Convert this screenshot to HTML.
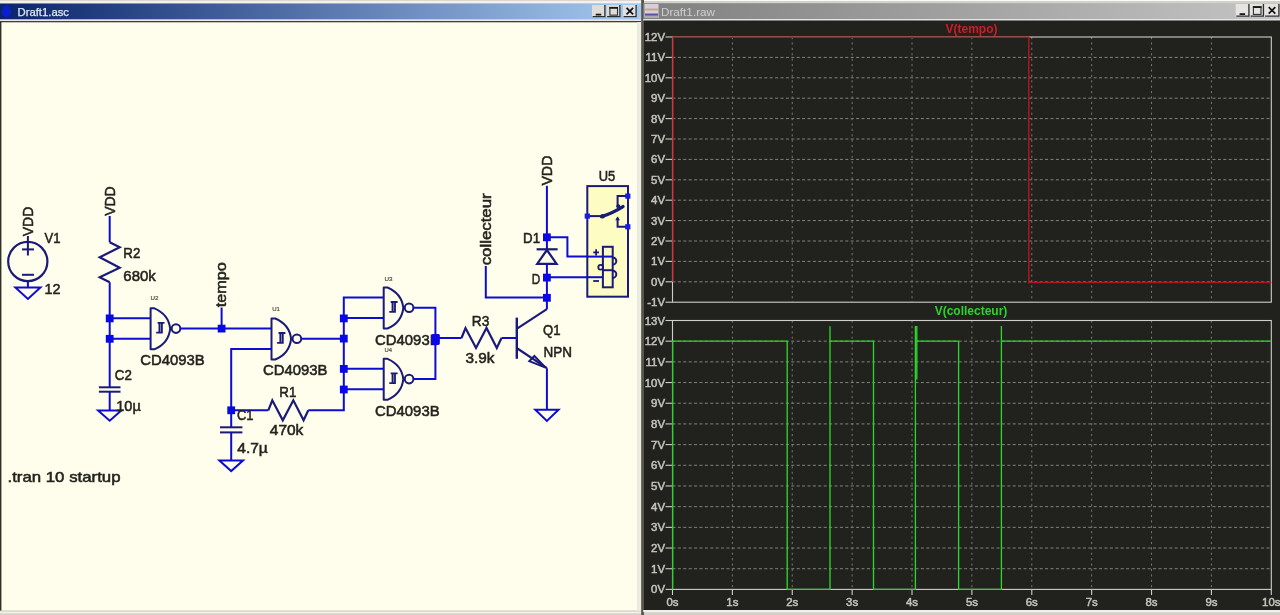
<!DOCTYPE html>
<html><head><meta charset="utf-8"><style>
html,body{margin:0;padding:0;width:1280px;height:615px;overflow:hidden;background:#d4d0c8;}
svg{position:absolute;left:0;top:0;font-family:"Liberation Sans", sans-serif;will-change:transform;}
</style></head><body>
<svg width="1280" height="615" viewBox="0 0 1280 615">
<defs>
<linearGradient id="tb1" x1="0" x2="1" y1="0" y2="0"><stop offset="0" stop-color="#0a246a"/><stop offset="1" stop-color="#a6caf0"/></linearGradient>
<linearGradient id="tb2" x1="0" x2="1" y1="0" y2="0"><stop offset="0" stop-color="#808080"/><stop offset="1" stop-color="#c4c4c4"/></linearGradient>
</defs>
<rect x="0" y="0" width="1280" height="615" fill="#d4d0c8"/>
<rect x="0" y="0" width="641" height="1" fill="#dcd6ce"/>
<rect x="0" y="1" width="641" height="2.5" fill="#f2f0f0"/>
<rect x="643" y="0" width="637" height="1.2" fill="#fafaf6"/>
<rect x="643" y="1.2" width="637" height="2" fill="#d0d0cc"/>
<!-- left window -->
<rect x="0" y="3.5" width="641" height="16" fill="url(#tb1)"/>
<rect x="0" y="19.5" width="641" height="1.5" fill="#e8e8e8"/>
<rect x="0" y="21" width="641" height="1.5" fill="#404038"/>
<rect x="0" y="22" width="1.6" height="589" fill="#303028"/>
<rect x="1.6" y="22.5" width="635.6" height="588" fill="#fffeec"/>
<rect x="0" y="610.5" width="641" height="1.4" fill="#dedbd0"/>
<rect x="0" y="611.9" width="641" height="1.5" fill="#f2f0e8"/>
<rect x="637.2" y="22" width="3.8" height="589" fill="#ecebe4"/>
<rect x="641.2" y="0" width="2.8" height="615" fill="#56564e"/>
<ellipse cx="6.5" cy="11.5" rx="4.5" ry="6" fill="#0a1ee0" opacity="0.85"/>
<text x="17.5" y="16.2" font-size="10" fill="#e0e8f4" stroke="#e0e8f4" stroke-width="0.25" textLength="51.5" lengthAdjust="spacingAndGlyphs">Draft1.asc</text>
<!-- right window -->
<rect x="643.2" y="3.2" width="637" height="15.8" fill="url(#tb2)"/>
<rect x="643.2" y="19" width="637" height="1.5" fill="#e4e4e4"/>
<rect x="644" y="20.5" width="636" height="589.5" fill="#21211e"/>
<rect x="643.2" y="610" width="637" height="2.2" fill="#f0f0ec"/>
<rect x="644.5" y="4" width="14" height="14" fill="#d8d0d8"/>
<rect x="645" y="8.5" width="13" height="2" fill="#c0a890"/>
<rect x="645" y="13.5" width="13" height="2.2" fill="#6050a8"/>
<rect x="645" y="16.2" width="13" height="1.6" fill="#a0a0a8"/>
<text x="661" y="16" font-size="10" fill="#cfcfcf" textLength="54" lengthAdjust="spacingAndGlyphs">Draft1.raw</text>
<rect x="592" y="5" width="13.5" height="12.3" fill="#e0dcd6"/><path d="M592.6,16.7 H604.9 V5" fill="none" stroke="#2a2e30" stroke-width="1.3"/><rect x="595.75" y="13.700000000000001" width="5.5" height="1.8" fill="#1a1a1a"/><rect x="606.5" y="5" width="14" height="12.3" fill="#dcdcd8"/><path d="M607.1,16.7 H619.9 V5" fill="none" stroke="#2a2e30" stroke-width="1.3"/><rect x="609.9" y="7.550000000000001" width="7.6" height="7.6" fill="none" stroke="#303030" stroke-width="1.1"/><rect x="609.4" y="6.95" width="8.6" height="1.8" fill="#1a1a1a"/><rect x="623" y="5" width="13.7" height="12.3" fill="#e0e0e0"/><path d="M623.6,16.7 H636.1 V5" fill="none" stroke="#2a2e30" stroke-width="1.3"/><path d="M626.5500000000001,7.8500000000000005 L633.15,14.45 M633.15,7.8500000000000005 L626.5500000000001,14.45" stroke="#111" stroke-width="1.7"/><rect x="1235.7" y="4" width="13.8" height="12.8" fill="#e6e4e0"/><path d="M1236.3,16.2 H1248.9 V4" fill="none" stroke="#2a2e30" stroke-width="1.3"/><rect x="1239.6000000000001" y="13.200000000000001" width="5.5" height="1.8" fill="#1a1a1a"/><rect x="1250" y="4" width="14" height="12.8" fill="#e6e4e0"/><path d="M1250.6,16.2 H1263.4 V4" fill="none" stroke="#2a2e30" stroke-width="1.3"/><rect x="1253.4" y="6.800000000000001" width="7.6" height="7.6" fill="none" stroke="#303030" stroke-width="1.1"/><rect x="1252.9" y="6.2" width="8.6" height="1.8" fill="#1a1a1a"/><rect x="1264.5" y="4" width="15" height="12.8" fill="#e6e4e0"/><path d="M1265.1,16.2 H1278.9 V4" fill="none" stroke="#2a2e30" stroke-width="1.3"/><path d="M1268.7,7.1000000000000005 L1275.3,13.7 M1275.3,7.1000000000000005 L1268.7,13.7" stroke="#111" stroke-width="1.7"/>
<circle cx="27.8" cy="261.5" r="19.6" fill="none" stroke="#1a1a78" stroke-width="2.2"/>
<polyline points="22.00,249.40 34.00,249.40" fill="none" stroke="#1a1a78" stroke-width="2" stroke-linejoin="miter" stroke-linecap="butt"/>
<polyline points="27.90,236.00 27.90,255.50" fill="none" stroke="#1a1a78" stroke-width="2" stroke-linejoin="miter" stroke-linecap="butt"/>
<polyline points="22.00,274.80 34.00,274.80" fill="none" stroke="#1a1a78" stroke-width="2" stroke-linejoin="miter" stroke-linecap="butt"/>
<polyline points="27.90,281.00 27.90,287.50" fill="none" stroke="#0c0cd2" stroke-width="2" stroke-linejoin="miter" stroke-linecap="butt"/>
<polygon points="15.399999999999999,287.5 40.4,287.5 27.9,299.0" fill="none" stroke="#0c0cd2" stroke-width="2" stroke-linejoin="miter"/>
<text x="33.5" y="236.2" font-size="15" fill="#24241f" stroke="#24241f" stroke-width="0.55" textLength="29.5" lengthAdjust="spacingAndGlyphs" transform="rotate(-90 33.5 236.2)">VDD</text>
<text x="44.5" y="242.6" font-size="15" fill="#24241f" stroke="#24241f" stroke-width="0.55" textLength="16" lengthAdjust="spacingAndGlyphs">V1</text>
<text x="44.5" y="293.6" font-size="15" fill="#24241f" stroke="#24241f" stroke-width="0.55" textLength="16" lengthAdjust="spacingAndGlyphs">12</text>
<text x="114.9" y="215.8" font-size="15" fill="#24241f" stroke="#24241f" stroke-width="0.55" textLength="29.5" lengthAdjust="spacingAndGlyphs" transform="rotate(-90 114.9 215.8)">VDD</text>
<polyline points="109.70,216.00 109.70,242.30" fill="none" stroke="#0c0cd2" stroke-width="2" stroke-linejoin="miter" stroke-linecap="butt"/>
<polyline points="109.70,242.30 119.70,247.30 99.70,257.30 119.70,267.80 99.70,277.30 109.70,282.30" fill="none" stroke="#1a1a78" stroke-width="2.2" stroke-linejoin="miter" stroke-linecap="butt"/>
<polyline points="109.70,282.30 109.70,387.30" fill="none" stroke="#0c0cd2" stroke-width="2" stroke-linejoin="miter" stroke-linecap="butt"/>
<polyline points="98.90,387.30 120.50,387.30" fill="none" stroke="#1a1a78" stroke-width="2" stroke-linejoin="miter" stroke-linecap="butt"/>
<polyline points="98.90,391.70 120.50,391.70" fill="none" stroke="#1a1a78" stroke-width="2" stroke-linejoin="miter" stroke-linecap="butt"/>
<polyline points="109.70,391.70 109.70,410.40" fill="none" stroke="#0c0cd2" stroke-width="2" stroke-linejoin="miter" stroke-linecap="butt"/>
<polygon points="98.10000000000001,410.4 121.3,410.4 109.7,420.7" fill="none" stroke="#0c0cd2" stroke-width="2" stroke-linejoin="miter"/>
<rect x="105.80" y="314.50" width="7.8" height="7.8" fill="#0808e8"/>
<rect x="105.80" y="334.90" width="7.8" height="7.8" fill="#0808e8"/>
<polyline points="109.70,318.30 150.60,318.30" fill="none" stroke="#0c0cd2" stroke-width="2" stroke-linejoin="miter" stroke-linecap="butt"/>
<polyline points="109.70,338.80 150.60,338.80" fill="none" stroke="#0c0cd2" stroke-width="2" stroke-linejoin="miter" stroke-linecap="butt"/>
<text x="123.3" y="258.2" font-size="15" fill="#24241f" stroke="#24241f" stroke-width="0.55" textLength="17" lengthAdjust="spacingAndGlyphs">R2</text>
<text x="123.3" y="281.0" font-size="15" fill="#24241f" stroke="#24241f" stroke-width="0.55" textLength="32.5" lengthAdjust="spacingAndGlyphs">680k</text>
<text x="114.8" y="379.6" font-size="15" fill="#24241f" stroke="#24241f" stroke-width="0.55" textLength="17" lengthAdjust="spacingAndGlyphs">C2</text>
<text x="116.3" y="410.6" font-size="15" fill="#24241f" stroke="#24241f" stroke-width="0.55" textLength="24.5" lengthAdjust="spacingAndGlyphs">10µ</text>
<path d="M150.6,308.3 H154.4 Q168.6,314.3 170.2,328.6 Q168.6,343.3 154.4,349.3 H150.6 Z" fill="none" stroke="#1a1a78" stroke-width="2" stroke-linejoin="round"/>
<circle cx="176.0" cy="328.6" r="4.3" fill="none" stroke="#1a1a78" stroke-width="2"/>
<path d="M156.2,332.6 H161.9 V322.8 M157.6,322.8 H164.5 M159.4,322.8 V332.6" fill="none" stroke="#1a1a78" stroke-width="1.8"/>
<rect x="159.4" y="322.8" width="2.5" height="9.8" fill="#1a1a78" fill-opacity="0.35"/>
<text x="150.5" y="300.3" font-size="6" fill="#505048" stroke="#505048" stroke-width="0.2" textLength="8" lengthAdjust="spacingAndGlyphs">U2</text>
<text x="140.3" y="365.1" font-size="15" fill="#24241f" stroke="#24241f" stroke-width="0.55" textLength="64.5" lengthAdjust="spacingAndGlyphs">CD4093B</text>
<polyline points="180.00,328.60 271.50,328.60" fill="none" stroke="#0c0cd2" stroke-width="2" stroke-linejoin="miter" stroke-linecap="butt"/>
<rect x="217.70" y="324.70" width="7.8" height="7.8" fill="#0808e8"/>
<polyline points="221.60,328.60 221.60,307.50" fill="none" stroke="#0c0cd2" stroke-width="2" stroke-linejoin="miter" stroke-linecap="butt"/>
<text x="226.3" y="307.3" font-size="15" fill="#24241f" stroke="#24241f" stroke-width="0.55" textLength="45" lengthAdjust="spacingAndGlyphs" transform="rotate(-90 226.3 307.3)">tempo</text>
<path d="M271.5,318.5 H275.3 Q289.5,324.5 291.1,338.8 Q289.5,353.5 275.3,359.5 H271.5 Z" fill="none" stroke="#1a1a78" stroke-width="2" stroke-linejoin="round"/>
<circle cx="296.9" cy="338.8" r="4.3" fill="none" stroke="#1a1a78" stroke-width="2"/>
<path d="M277.1,342.8 H282.8 V333.0 M278.5,333.0 H285.4 M280.3,333.0 V342.8" fill="none" stroke="#1a1a78" stroke-width="1.8"/>
<rect x="280.3" y="333.0" width="2.5" height="9.8" fill="#1a1a78" fill-opacity="0.35"/>
<text x="272.2" y="311.2" font-size="6" fill="#505048" stroke="#505048" stroke-width="0.2" textLength="7.7" lengthAdjust="spacingAndGlyphs">U1</text>
<text x="263.0" y="375.3" font-size="15" fill="#24241f" stroke="#24241f" stroke-width="0.55" textLength="64.5" lengthAdjust="spacingAndGlyphs">CD4093B</text>
<polyline points="301.00,338.80 343.80,338.80" fill="none" stroke="#0c0cd2" stroke-width="2" stroke-linejoin="miter" stroke-linecap="butt"/>
<polyline points="271.50,349.00 231.20,349.00 231.20,427.30" fill="none" stroke="#0c0cd2" stroke-width="2" stroke-linejoin="miter" stroke-linecap="butt"/>
<polyline points="220.00,427.30 242.40,427.30" fill="none" stroke="#1a1a78" stroke-width="2" stroke-linejoin="miter" stroke-linecap="butt"/>
<polyline points="220.00,432.40 242.40,432.40" fill="none" stroke="#1a1a78" stroke-width="2" stroke-linejoin="miter" stroke-linecap="butt"/>
<polyline points="231.20,432.40 231.20,460.60" fill="none" stroke="#0c0cd2" stroke-width="2" stroke-linejoin="miter" stroke-linecap="butt"/>
<polygon points="219.39999999999998,460.6 243.0,460.6 231.2,471.1" fill="none" stroke="#0c0cd2" stroke-width="2" stroke-linejoin="miter"/>
<rect x="227.30" y="406.40" width="7.8" height="7.8" fill="#0808e8"/>
<polyline points="231.20,410.30 268.30,410.30" fill="none" stroke="#0c0cd2" stroke-width="2" stroke-linejoin="miter" stroke-linecap="butt"/>
<polyline points="268.30,410.30 272.30,400.30 282.80,420.30 293.30,400.30 303.60,420.30 308.30,410.30" fill="none" stroke="#1a1a78" stroke-width="2.2" stroke-linejoin="miter" stroke-linecap="butt"/>
<polyline points="308.30,410.30 343.80,410.30 343.80,297.50 383.70,297.50" fill="none" stroke="#0c0cd2" stroke-width="2" stroke-linejoin="miter" stroke-linecap="butt"/>
<text x="279.3" y="396.6" font-size="15" fill="#24241f" stroke="#24241f" stroke-width="0.55" textLength="17" lengthAdjust="spacingAndGlyphs">R1</text>
<text x="237.0" y="420.2" font-size="15" fill="#24241f" stroke="#24241f" stroke-width="0.55" textLength="16.5" lengthAdjust="spacingAndGlyphs">C1</text>
<text x="269.8" y="434.6" font-size="15" fill="#24241f" stroke="#24241f" stroke-width="0.55" textLength="33.5" lengthAdjust="spacingAndGlyphs">470k</text>
<text x="237.3" y="452.6" font-size="15" fill="#24241f" stroke="#24241f" stroke-width="0.55" textLength="30.5" lengthAdjust="spacingAndGlyphs">4.7µ</text>
<path d="M383.7,287.5 H387.5 Q401.7,293.5 403.3,307.8 Q401.7,322.5 387.5,328.5 H383.7 Z" fill="none" stroke="#1a1a78" stroke-width="2" stroke-linejoin="round"/>
<circle cx="409.09999999999997" cy="307.8" r="4.3" fill="none" stroke="#1a1a78" stroke-width="2"/>
<path d="M389.3,311.8 H395.0 V302.0 M390.7,302.0 H397.59999999999997 M392.5,302.0 V311.8" fill="none" stroke="#1a1a78" stroke-width="1.8"/>
<rect x="392.5" y="302.0" width="2.5" height="9.8" fill="#1a1a78" fill-opacity="0.35"/>
<path d="M383.7,358.8 H387.5 Q401.7,364.8 403.3,379.1 Q401.7,393.8 387.5,399.8 H383.7 Z" fill="none" stroke="#1a1a78" stroke-width="2" stroke-linejoin="round"/>
<circle cx="409.09999999999997" cy="379.1" r="4.3" fill="none" stroke="#1a1a78" stroke-width="2"/>
<path d="M389.3,383.1 H395.0 V373.3 M390.7,373.3 H397.59999999999997 M392.5,373.3 V383.1" fill="none" stroke="#1a1a78" stroke-width="1.8"/>
<rect x="392.5" y="373.3" width="2.5" height="9.8" fill="#1a1a78" fill-opacity="0.35"/>
<text x="384.5" y="280.5" font-size="6" fill="#505048" stroke="#505048" stroke-width="0.2" textLength="8" lengthAdjust="spacingAndGlyphs">U3</text>
<text x="384.5" y="351.5" font-size="6" fill="#505048" stroke="#505048" stroke-width="0.2" textLength="7.5" lengthAdjust="spacingAndGlyphs">U4</text>
<polyline points="343.80,318.00 383.70,318.00" fill="none" stroke="#0c0cd2" stroke-width="2" stroke-linejoin="miter" stroke-linecap="butt"/>
<polyline points="343.80,368.80 383.70,368.80" fill="none" stroke="#0c0cd2" stroke-width="2" stroke-linejoin="miter" stroke-linecap="butt"/>
<polyline points="343.80,389.30 383.70,389.30" fill="none" stroke="#0c0cd2" stroke-width="2" stroke-linejoin="miter" stroke-linecap="butt"/>
<rect x="339.90" y="314.50" width="7.8" height="7.8" fill="#0808e8"/>
<rect x="339.90" y="334.70" width="7.8" height="7.8" fill="#0808e8"/>
<rect x="339.90" y="365.00" width="7.8" height="7.8" fill="#0808e8"/>
<rect x="339.90" y="385.60" width="7.8" height="7.8" fill="#0808e8"/>
<text x="375.1" y="344.5" font-size="15" fill="#24241f" stroke="#24241f" stroke-width="0.55" textLength="64.5" lengthAdjust="spacingAndGlyphs">CD4093B</text>
<text x="375.1" y="415.6" font-size="15" fill="#24241f" stroke="#24241f" stroke-width="0.55" textLength="64.5" lengthAdjust="spacingAndGlyphs">CD4093B</text>
<polyline points="413.50,307.80 435.40,307.80 435.40,379.10 413.50,379.10" fill="none" stroke="#0c0cd2" stroke-width="2" stroke-linejoin="miter" stroke-linecap="butt"/>
<polyline points="435.40,338.00 461.50,338.00" fill="none" stroke="#0c0cd2" stroke-width="2" stroke-linejoin="miter" stroke-linecap="butt"/>
<rect x="431.50" y="334.40" width="7.8" height="7.8" fill="#0808e8"/>
<rect x="431.6" y="334.0" width="8.2" height="10.9" rx="1.6" fill="#0808e8"/>
<polyline points="461.50,338.00 465.50,328.00 476.00,348.00 486.50,328.00 496.80,348.00 501.50,338.00" fill="none" stroke="#1a1a78" stroke-width="2.2" stroke-linejoin="miter" stroke-linecap="butt"/>
<polyline points="501.50,338.00 516.80,338.00" fill="none" stroke="#0c0cd2" stroke-width="2" stroke-linejoin="miter" stroke-linecap="butt"/>
<text x="471.8" y="325.9" font-size="15" fill="#24241f" stroke="#24241f" stroke-width="0.55" textLength="17.5" lengthAdjust="spacingAndGlyphs">R3</text>
<text x="465.4" y="362.7" font-size="15" fill="#24241f" stroke="#24241f" stroke-width="0.55" textLength="29" lengthAdjust="spacingAndGlyphs">3.9k</text>
<polyline points="516.80,317.60 516.80,358.80" fill="none" stroke="#1a1a78" stroke-width="2.4" stroke-linejoin="miter" stroke-linecap="butt"/>
<polyline points="517.40,328.30 546.90,309.20" fill="none" stroke="#1a1a78" stroke-width="2.2" stroke-linejoin="miter" stroke-linecap="butt"/>
<polyline points="546.90,309.20 546.90,297.50" fill="none" stroke="#0c0cd2" stroke-width="2" stroke-linejoin="miter" stroke-linecap="butt"/>
<polyline points="517.40,348.50 546.90,368.20" fill="none" stroke="#1a1a78" stroke-width="2.2" stroke-linejoin="miter" stroke-linecap="butt"/>
<polygon points="545.6,367.6 529.3,361.2 534.4,356.0" fill="none" stroke="#1a1a78" stroke-width="2" stroke-linejoin="miter"/>
<polyline points="546.90,368.20 546.90,409.70" fill="none" stroke="#0c0cd2" stroke-width="2" stroke-linejoin="miter" stroke-linecap="butt"/>
<polygon points="535.3,409.7 558.5,409.7 546.9,420.9" fill="none" stroke="#0c0cd2" stroke-width="2" stroke-linejoin="miter"/>
<text x="543.0" y="334.8" font-size="15" fill="#24241f" stroke="#24241f" stroke-width="0.55" textLength="17.5" lengthAdjust="spacingAndGlyphs">Q1</text>
<text x="543.4" y="357.1" font-size="15" fill="#24241f" stroke="#24241f" stroke-width="0.55" textLength="28.5" lengthAdjust="spacingAndGlyphs">NPN</text>
<polyline points="546.90,297.50 485.80,297.50 485.80,266.00" fill="none" stroke="#0c0cd2" stroke-width="2" stroke-linejoin="miter" stroke-linecap="butt"/>
<rect x="543.00" y="293.90" width="7.8" height="7.8" fill="#0808e8"/>
<text x="491.2" y="265.3" font-size="15" fill="#24241f" stroke="#24241f" stroke-width="0.55" textLength="72" lengthAdjust="spacingAndGlyphs" transform="rotate(-90 491.2 265.3)">collecteur</text>
<text x="552.3" y="185.6" font-size="15" fill="#24241f" stroke="#24241f" stroke-width="0.55" textLength="30" lengthAdjust="spacingAndGlyphs" transform="rotate(-90 552.3 185.6)">VDD</text>
<polyline points="546.90,185.80 546.90,249.30" fill="none" stroke="#0c0cd2" stroke-width="2" stroke-linejoin="miter" stroke-linecap="butt"/>
<polyline points="536.60,249.30 557.60,249.30" fill="none" stroke="#1a1a78" stroke-width="2.2" stroke-linejoin="miter" stroke-linecap="butt"/>
<polygon points="546.9,250 537.2,263.8 556.6,263.8" fill="none" stroke="#1a1a78" stroke-width="2.2" stroke-linejoin="miter"/>
<polyline points="546.90,263.80 546.90,297.50" fill="none" stroke="#0c0cd2" stroke-width="2" stroke-linejoin="miter" stroke-linecap="butt"/>
<rect x="543.00" y="233.40" width="7.8" height="7.8" fill="#0808e8"/>
<rect x="543.00" y="273.70" width="7.8" height="7.8" fill="#0808e8"/>
<polyline points="546.90,237.30 567.40,237.30 567.40,256.60 602.90,256.60" fill="none" stroke="#0c0cd2" stroke-width="2" stroke-linejoin="miter" stroke-linecap="butt"/>
<polyline points="546.90,277.20 602.90,277.20" fill="none" stroke="#0c0cd2" stroke-width="2" stroke-linejoin="miter" stroke-linecap="butt"/>
<text x="523.1" y="242.6" font-size="15" fill="#24241f" stroke="#24241f" stroke-width="0.55" textLength="17" lengthAdjust="spacingAndGlyphs">D1</text>
<text x="531.8" y="283.6" font-size="15" fill="#24241f" stroke="#24241f" stroke-width="0.55" textLength="8.5" lengthAdjust="spacingAndGlyphs">D</text>
<rect x="587.3" y="186.1" width="40.7" height="110.6" fill="#fdfcc2" stroke="#1a1a78" stroke-width="2"/>
<text x="598.8" y="181.3" font-size="15" fill="#24241f" stroke="#24241f" stroke-width="0.55" textLength="16.5" lengthAdjust="spacingAndGlyphs">U5</text>
<polyline points="587.30,256.60 612.70,256.60" fill="none" stroke="#0c0cd2" stroke-width="2" stroke-linejoin="miter" stroke-linecap="butt"/>
<polyline points="587.30,277.20 602.90,277.20" fill="none" stroke="#0c0cd2" stroke-width="2" stroke-linejoin="miter" stroke-linecap="butt"/>
<rect x="602.9" y="246.8" width="9.8" height="40.5" fill="none" stroke="#1a1a78" stroke-width="2"/>
<polyline points="602.90,270.20 612.70,270.20" fill="none" stroke="#1a1a78" stroke-width="2" stroke-linejoin="miter" stroke-linecap="butt"/>
<path d="M612.7,257.4 A3.6,3.6 0 0 1 612.7,264.6 M612.7,270.7 A3.6,3.6 0 0 1 612.7,277.9" fill="none" stroke="#1a1a78" stroke-width="2"/>
<circle cx="600.7" cy="267.3" r="2.4" fill="none" stroke="#1a1a78" stroke-width="1.8"/>
<polyline points="593.20,252.40 599.00,252.40" fill="none" stroke="#1a1a78" stroke-width="1.8" stroke-linejoin="miter" stroke-linecap="butt"/>
<polyline points="596.10,249.30 596.10,255.60" fill="none" stroke="#1a1a78" stroke-width="1.8" stroke-linejoin="miter" stroke-linecap="butt"/>
<polyline points="593.20,281.00 599.00,281.00" fill="none" stroke="#1a1a78" stroke-width="1.8" stroke-linejoin="miter" stroke-linecap="butt"/>
<polyline points="587.30,216.10 601.00,216.10" fill="none" stroke="#1a1a78" stroke-width="2" stroke-linejoin="miter" stroke-linecap="butt"/>
<path d="M601.5,216.6 Q612,213.5 623,206.6" fill="none" stroke="#1a1a78" stroke-width="3.4" stroke-linecap="round"/>
<polyline points="627.80,196.10 617.60,196.10 617.60,205.50" fill="none" stroke="#1a1a78" stroke-width="2" stroke-linejoin="miter" stroke-linecap="butt"/>
<circle cx="618.3" cy="206.3" r="2.1" fill="#1a1a78"/>
<circle cx="602.6" cy="216.2" r="2.3" fill="#1a1a78"/>
<polyline points="627.80,226.80 617.60,226.80 617.60,217.80" fill="none" stroke="#1a1a78" stroke-width="2" stroke-linejoin="miter" stroke-linecap="butt"/>
<polygon points="617.6,216.6 615.2,220.2 620,220.2" fill="#1a1a78"/>
<rect x="584.6999999999999" y="213.5" width="5.2" height="5.2" fill="#1a1ae6"/>
<rect x="625.1999999999999" y="193.5" width="5.2" height="5.2" fill="#1a1ae6"/>
<rect x="625.1999999999999" y="224.20000000000002" width="5.2" height="5.2" fill="#1a1ae6"/>
<text x="7.5" y="482.3" font-size="15" fill="#24241f" stroke="#24241f" stroke-width="0.55" textLength="113" lengthAdjust="spacingAndGlyphs">.tran 10 startup</text>
<line x1="672.5" y1="281.80" x2="1271.3" y2="281.80" stroke="#84847c" stroke-width="1" stroke-dasharray="3 2.4"/>
<line x1="672.5" y1="261.40" x2="1271.3" y2="261.40" stroke="#84847c" stroke-width="1" stroke-dasharray="3 2.4"/>
<line x1="672.5" y1="241.00" x2="1271.3" y2="241.00" stroke="#84847c" stroke-width="1" stroke-dasharray="3 2.4"/>
<line x1="672.5" y1="220.60" x2="1271.3" y2="220.60" stroke="#84847c" stroke-width="1" stroke-dasharray="3 2.4"/>
<line x1="672.5" y1="200.20" x2="1271.3" y2="200.20" stroke="#84847c" stroke-width="1" stroke-dasharray="3 2.4"/>
<line x1="672.5" y1="179.80" x2="1271.3" y2="179.80" stroke="#84847c" stroke-width="1" stroke-dasharray="3 2.4"/>
<line x1="672.5" y1="159.40" x2="1271.3" y2="159.40" stroke="#84847c" stroke-width="1" stroke-dasharray="3 2.4"/>
<line x1="672.5" y1="139.00" x2="1271.3" y2="139.00" stroke="#84847c" stroke-width="1" stroke-dasharray="3 2.4"/>
<line x1="672.5" y1="118.60" x2="1271.3" y2="118.60" stroke="#84847c" stroke-width="1" stroke-dasharray="3 2.4"/>
<line x1="672.5" y1="98.20" x2="1271.3" y2="98.20" stroke="#84847c" stroke-width="1" stroke-dasharray="3 2.4"/>
<line x1="672.5" y1="77.80" x2="1271.3" y2="77.80" stroke="#84847c" stroke-width="1" stroke-dasharray="3 2.4"/>
<line x1="672.5" y1="57.40" x2="1271.3" y2="57.40" stroke="#84847c" stroke-width="1" stroke-dasharray="3 2.4"/>
<line x1="672.5" y1="568.72" x2="1271.3" y2="568.72" stroke="#84847c" stroke-width="1" stroke-dasharray="3 2.4"/>
<line x1="672.5" y1="548.03" x2="1271.3" y2="548.03" stroke="#84847c" stroke-width="1" stroke-dasharray="3 2.4"/>
<line x1="672.5" y1="527.35" x2="1271.3" y2="527.35" stroke="#84847c" stroke-width="1" stroke-dasharray="3 2.4"/>
<line x1="672.5" y1="506.66" x2="1271.3" y2="506.66" stroke="#84847c" stroke-width="1" stroke-dasharray="3 2.4"/>
<line x1="672.5" y1="485.98" x2="1271.3" y2="485.98" stroke="#84847c" stroke-width="1" stroke-dasharray="3 2.4"/>
<line x1="672.5" y1="465.29" x2="1271.3" y2="465.29" stroke="#84847c" stroke-width="1" stroke-dasharray="3 2.4"/>
<line x1="672.5" y1="444.61" x2="1271.3" y2="444.61" stroke="#84847c" stroke-width="1" stroke-dasharray="3 2.4"/>
<line x1="672.5" y1="423.92" x2="1271.3" y2="423.92" stroke="#84847c" stroke-width="1" stroke-dasharray="3 2.4"/>
<line x1="672.5" y1="403.24" x2="1271.3" y2="403.24" stroke="#84847c" stroke-width="1" stroke-dasharray="3 2.4"/>
<line x1="672.5" y1="382.55" x2="1271.3" y2="382.55" stroke="#84847c" stroke-width="1" stroke-dasharray="3 2.4"/>
<line x1="672.5" y1="361.87" x2="1271.3" y2="361.87" stroke="#84847c" stroke-width="1" stroke-dasharray="3 2.4"/>
<line x1="672.5" y1="341.18" x2="1271.3" y2="341.18" stroke="#84847c" stroke-width="1" stroke-dasharray="3 2.4"/>
<line x1="732.38" y1="37.0" x2="732.38" y2="302.2" stroke="#76766e" stroke-width="1" stroke-dasharray="2.2 3.2"/>
<line x1="732.38" y1="320.5" x2="732.38" y2="589.4" stroke="#76766e" stroke-width="1" stroke-dasharray="2.2 3.2"/>
<line x1="792.26" y1="37.0" x2="792.26" y2="302.2" stroke="#76766e" stroke-width="1" stroke-dasharray="2.2 3.2"/>
<line x1="792.26" y1="320.5" x2="792.26" y2="589.4" stroke="#76766e" stroke-width="1" stroke-dasharray="2.2 3.2"/>
<line x1="852.14" y1="37.0" x2="852.14" y2="302.2" stroke="#76766e" stroke-width="1" stroke-dasharray="2.2 3.2"/>
<line x1="852.14" y1="320.5" x2="852.14" y2="589.4" stroke="#76766e" stroke-width="1" stroke-dasharray="2.2 3.2"/>
<line x1="912.02" y1="37.0" x2="912.02" y2="302.2" stroke="#76766e" stroke-width="1" stroke-dasharray="2.2 3.2"/>
<line x1="912.02" y1="320.5" x2="912.02" y2="589.4" stroke="#76766e" stroke-width="1" stroke-dasharray="2.2 3.2"/>
<line x1="971.90" y1="37.0" x2="971.90" y2="302.2" stroke="#76766e" stroke-width="1" stroke-dasharray="2.2 3.2"/>
<line x1="971.90" y1="320.5" x2="971.90" y2="589.4" stroke="#76766e" stroke-width="1" stroke-dasharray="2.2 3.2"/>
<line x1="1031.78" y1="37.0" x2="1031.78" y2="302.2" stroke="#76766e" stroke-width="1" stroke-dasharray="2.2 3.2"/>
<line x1="1031.78" y1="320.5" x2="1031.78" y2="589.4" stroke="#76766e" stroke-width="1" stroke-dasharray="2.2 3.2"/>
<line x1="1091.66" y1="37.0" x2="1091.66" y2="302.2" stroke="#76766e" stroke-width="1" stroke-dasharray="2.2 3.2"/>
<line x1="1091.66" y1="320.5" x2="1091.66" y2="589.4" stroke="#76766e" stroke-width="1" stroke-dasharray="2.2 3.2"/>
<line x1="1151.54" y1="37.0" x2="1151.54" y2="302.2" stroke="#76766e" stroke-width="1" stroke-dasharray="2.2 3.2"/>
<line x1="1151.54" y1="320.5" x2="1151.54" y2="589.4" stroke="#76766e" stroke-width="1" stroke-dasharray="2.2 3.2"/>
<line x1="1211.42" y1="37.0" x2="1211.42" y2="302.2" stroke="#76766e" stroke-width="1" stroke-dasharray="2.2 3.2"/>
<line x1="1211.42" y1="320.5" x2="1211.42" y2="589.4" stroke="#76766e" stroke-width="1" stroke-dasharray="2.2 3.2"/>
<rect x="672.5" y="37.0" width="598.80" height="265.20" fill="none" stroke="#cfcfc8" stroke-width="1.1"/>
<rect x="672.5" y="320.5" width="598.80" height="268.90" fill="none" stroke="#cfcfc8" stroke-width="1.1"/>
<line x1="665.5" y1="302.20" x2="672.5" y2="302.20" stroke="#cfcfc8" stroke-width="1.1"/>
<text x="665" y="306.20" font-size="11.4" fill="#c4c4bc" stroke="#c4c4bc" stroke-width="0.5" text-anchor="end">-1V</text>
<line x1="665.5" y1="281.80" x2="672.5" y2="281.80" stroke="#cfcfc8" stroke-width="1.1"/>
<text x="665" y="285.80" font-size="11.4" fill="#c4c4bc" stroke="#c4c4bc" stroke-width="0.5" text-anchor="end">0V</text>
<line x1="665.5" y1="261.40" x2="672.5" y2="261.40" stroke="#cfcfc8" stroke-width="1.1"/>
<text x="665" y="265.40" font-size="11.4" fill="#c4c4bc" stroke="#c4c4bc" stroke-width="0.5" text-anchor="end">1V</text>
<line x1="665.5" y1="241.00" x2="672.5" y2="241.00" stroke="#cfcfc8" stroke-width="1.1"/>
<text x="665" y="245.00" font-size="11.4" fill="#c4c4bc" stroke="#c4c4bc" stroke-width="0.5" text-anchor="end">2V</text>
<line x1="665.5" y1="220.60" x2="672.5" y2="220.60" stroke="#cfcfc8" stroke-width="1.1"/>
<text x="665" y="224.60" font-size="11.4" fill="#c4c4bc" stroke="#c4c4bc" stroke-width="0.5" text-anchor="end">3V</text>
<line x1="665.5" y1="200.20" x2="672.5" y2="200.20" stroke="#cfcfc8" stroke-width="1.1"/>
<text x="665" y="204.20" font-size="11.4" fill="#c4c4bc" stroke="#c4c4bc" stroke-width="0.5" text-anchor="end">4V</text>
<line x1="665.5" y1="179.80" x2="672.5" y2="179.80" stroke="#cfcfc8" stroke-width="1.1"/>
<text x="665" y="183.80" font-size="11.4" fill="#c4c4bc" stroke="#c4c4bc" stroke-width="0.5" text-anchor="end">5V</text>
<line x1="665.5" y1="159.40" x2="672.5" y2="159.40" stroke="#cfcfc8" stroke-width="1.1"/>
<text x="665" y="163.40" font-size="11.4" fill="#c4c4bc" stroke="#c4c4bc" stroke-width="0.5" text-anchor="end">6V</text>
<line x1="665.5" y1="139.00" x2="672.5" y2="139.00" stroke="#cfcfc8" stroke-width="1.1"/>
<text x="665" y="143.00" font-size="11.4" fill="#c4c4bc" stroke="#c4c4bc" stroke-width="0.5" text-anchor="end">7V</text>
<line x1="665.5" y1="118.60" x2="672.5" y2="118.60" stroke="#cfcfc8" stroke-width="1.1"/>
<text x="665" y="122.60" font-size="11.4" fill="#c4c4bc" stroke="#c4c4bc" stroke-width="0.5" text-anchor="end">8V</text>
<line x1="665.5" y1="98.20" x2="672.5" y2="98.20" stroke="#cfcfc8" stroke-width="1.1"/>
<text x="665" y="102.20" font-size="11.4" fill="#c4c4bc" stroke="#c4c4bc" stroke-width="0.5" text-anchor="end">9V</text>
<line x1="665.5" y1="77.80" x2="672.5" y2="77.80" stroke="#cfcfc8" stroke-width="1.1"/>
<text x="665" y="81.80" font-size="11.4" fill="#c4c4bc" stroke="#c4c4bc" stroke-width="0.5" text-anchor="end">10V</text>
<line x1="665.5" y1="57.40" x2="672.5" y2="57.40" stroke="#cfcfc8" stroke-width="1.1"/>
<text x="665" y="61.40" font-size="11.4" fill="#c4c4bc" stroke="#c4c4bc" stroke-width="0.5" text-anchor="end">11V</text>
<line x1="665.5" y1="37.00" x2="672.5" y2="37.00" stroke="#cfcfc8" stroke-width="1.1"/>
<text x="665" y="41.00" font-size="11.4" fill="#c4c4bc" stroke="#c4c4bc" stroke-width="0.5" text-anchor="end">12V</text>
<line x1="665.5" y1="589.40" x2="672.5" y2="589.40" stroke="#cfcfc8" stroke-width="1.1"/>
<text x="665" y="593.40" font-size="11.4" fill="#c4c4bc" stroke="#c4c4bc" stroke-width="0.5" text-anchor="end">0V</text>
<line x1="665.5" y1="568.72" x2="672.5" y2="568.72" stroke="#cfcfc8" stroke-width="1.1"/>
<text x="665" y="572.72" font-size="11.4" fill="#c4c4bc" stroke="#c4c4bc" stroke-width="0.5" text-anchor="end">1V</text>
<line x1="665.5" y1="548.03" x2="672.5" y2="548.03" stroke="#cfcfc8" stroke-width="1.1"/>
<text x="665" y="552.03" font-size="11.4" fill="#c4c4bc" stroke="#c4c4bc" stroke-width="0.5" text-anchor="end">2V</text>
<line x1="665.5" y1="527.35" x2="672.5" y2="527.35" stroke="#cfcfc8" stroke-width="1.1"/>
<text x="665" y="531.35" font-size="11.4" fill="#c4c4bc" stroke="#c4c4bc" stroke-width="0.5" text-anchor="end">3V</text>
<line x1="665.5" y1="506.66" x2="672.5" y2="506.66" stroke="#cfcfc8" stroke-width="1.1"/>
<text x="665" y="510.66" font-size="11.4" fill="#c4c4bc" stroke="#c4c4bc" stroke-width="0.5" text-anchor="end">4V</text>
<line x1="665.5" y1="485.98" x2="672.5" y2="485.98" stroke="#cfcfc8" stroke-width="1.1"/>
<text x="665" y="489.98" font-size="11.4" fill="#c4c4bc" stroke="#c4c4bc" stroke-width="0.5" text-anchor="end">5V</text>
<line x1="665.5" y1="465.29" x2="672.5" y2="465.29" stroke="#cfcfc8" stroke-width="1.1"/>
<text x="665" y="469.29" font-size="11.4" fill="#c4c4bc" stroke="#c4c4bc" stroke-width="0.5" text-anchor="end">6V</text>
<line x1="665.5" y1="444.61" x2="672.5" y2="444.61" stroke="#cfcfc8" stroke-width="1.1"/>
<text x="665" y="448.61" font-size="11.4" fill="#c4c4bc" stroke="#c4c4bc" stroke-width="0.5" text-anchor="end">7V</text>
<line x1="665.5" y1="423.92" x2="672.5" y2="423.92" stroke="#cfcfc8" stroke-width="1.1"/>
<text x="665" y="427.92" font-size="11.4" fill="#c4c4bc" stroke="#c4c4bc" stroke-width="0.5" text-anchor="end">8V</text>
<line x1="665.5" y1="403.24" x2="672.5" y2="403.24" stroke="#cfcfc8" stroke-width="1.1"/>
<text x="665" y="407.24" font-size="11.4" fill="#c4c4bc" stroke="#c4c4bc" stroke-width="0.5" text-anchor="end">9V</text>
<line x1="665.5" y1="382.55" x2="672.5" y2="382.55" stroke="#cfcfc8" stroke-width="1.1"/>
<text x="665" y="386.55" font-size="11.4" fill="#c4c4bc" stroke="#c4c4bc" stroke-width="0.5" text-anchor="end">10V</text>
<line x1="665.5" y1="361.87" x2="672.5" y2="361.87" stroke="#cfcfc8" stroke-width="1.1"/>
<text x="665" y="365.87" font-size="11.4" fill="#c4c4bc" stroke="#c4c4bc" stroke-width="0.5" text-anchor="end">11V</text>
<line x1="665.5" y1="341.18" x2="672.5" y2="341.18" stroke="#cfcfc8" stroke-width="1.1"/>
<text x="665" y="345.18" font-size="11.4" fill="#c4c4bc" stroke="#c4c4bc" stroke-width="0.5" text-anchor="end">12V</text>
<line x1="665.5" y1="320.50" x2="672.5" y2="320.50" stroke="#cfcfc8" stroke-width="1.1"/>
<text x="665" y="324.50" font-size="11.4" fill="#c4c4bc" stroke="#c4c4bc" stroke-width="0.5" text-anchor="end">13V</text>
<line x1="672.50" y1="589.4" x2="672.50" y2="595" stroke="#cfcfc8" stroke-width="1.1"/>
<text x="672.50" y="605.5" font-size="11.4" fill="#c4c4bc" stroke="#c4c4bc" stroke-width="0.5" text-anchor="middle">0s</text>
<line x1="732.38" y1="589.4" x2="732.38" y2="595" stroke="#cfcfc8" stroke-width="1.1"/>
<text x="732.38" y="605.5" font-size="11.4" fill="#c4c4bc" stroke="#c4c4bc" stroke-width="0.5" text-anchor="middle">1s</text>
<line x1="792.26" y1="589.4" x2="792.26" y2="595" stroke="#cfcfc8" stroke-width="1.1"/>
<text x="792.26" y="605.5" font-size="11.4" fill="#c4c4bc" stroke="#c4c4bc" stroke-width="0.5" text-anchor="middle">2s</text>
<line x1="852.14" y1="589.4" x2="852.14" y2="595" stroke="#cfcfc8" stroke-width="1.1"/>
<text x="852.14" y="605.5" font-size="11.4" fill="#c4c4bc" stroke="#c4c4bc" stroke-width="0.5" text-anchor="middle">3s</text>
<line x1="912.02" y1="589.4" x2="912.02" y2="595" stroke="#cfcfc8" stroke-width="1.1"/>
<text x="912.02" y="605.5" font-size="11.4" fill="#c4c4bc" stroke="#c4c4bc" stroke-width="0.5" text-anchor="middle">4s</text>
<line x1="971.90" y1="589.4" x2="971.90" y2="595" stroke="#cfcfc8" stroke-width="1.1"/>
<text x="971.90" y="605.5" font-size="11.4" fill="#c4c4bc" stroke="#c4c4bc" stroke-width="0.5" text-anchor="middle">5s</text>
<line x1="1031.78" y1="589.4" x2="1031.78" y2="595" stroke="#cfcfc8" stroke-width="1.1"/>
<text x="1031.78" y="605.5" font-size="11.4" fill="#c4c4bc" stroke="#c4c4bc" stroke-width="0.5" text-anchor="middle">6s</text>
<line x1="1091.66" y1="589.4" x2="1091.66" y2="595" stroke="#cfcfc8" stroke-width="1.1"/>
<text x="1091.66" y="605.5" font-size="11.4" fill="#c4c4bc" stroke="#c4c4bc" stroke-width="0.5" text-anchor="middle">7s</text>
<line x1="1151.54" y1="589.4" x2="1151.54" y2="595" stroke="#cfcfc8" stroke-width="1.1"/>
<text x="1151.54" y="605.5" font-size="11.4" fill="#c4c4bc" stroke="#c4c4bc" stroke-width="0.5" text-anchor="middle">8s</text>
<line x1="1211.42" y1="589.4" x2="1211.42" y2="595" stroke="#cfcfc8" stroke-width="1.1"/>
<text x="1211.42" y="605.5" font-size="11.4" fill="#c4c4bc" stroke="#c4c4bc" stroke-width="0.5" text-anchor="middle">9s</text>
<line x1="1271.30" y1="589.4" x2="1271.30" y2="595" stroke="#cfcfc8" stroke-width="1.1"/>
<text x="1271.30" y="605.5" font-size="11.4" fill="#c4c4bc" stroke="#c4c4bc" stroke-width="0.5" text-anchor="middle">10s</text>
<polyline points="673.0,281.80 673.0,37.20 1028.8,37.20 1028.8,282.40 1271.3,282.40" fill="none" stroke="#ac1622" stroke-width="1.5"/>
<polyline points="672.70,589.40 672.70,341.18 787.20,341.18 787.20,589.40 830.00,589.40 830.00,326.20 830.00,341.18 873.50,341.18 873.50,589.40 915.40,589.40 915.40,326.00 915.40,341.18 958.60,341.18 958.60,589.40 1001.40,589.40 1001.40,326.00 1001.40,341.18 1271.30,341.18" fill="none" stroke="#2cd42c" stroke-width="1.35"/>
<line x1="916.8" y1="326" x2="916.8" y2="379.5" stroke="#2cd42c" stroke-width="1.4"/>
<text x="971.5" y="33.3" font-size="12" font-weight="bold" fill="#d01c26" text-anchor="middle">V(tempo)</text>
<text x="971" y="315.3" font-size="12" font-weight="bold" fill="#2cd42c" text-anchor="middle">V(collecteur)</text>
</svg>
</body></html>
